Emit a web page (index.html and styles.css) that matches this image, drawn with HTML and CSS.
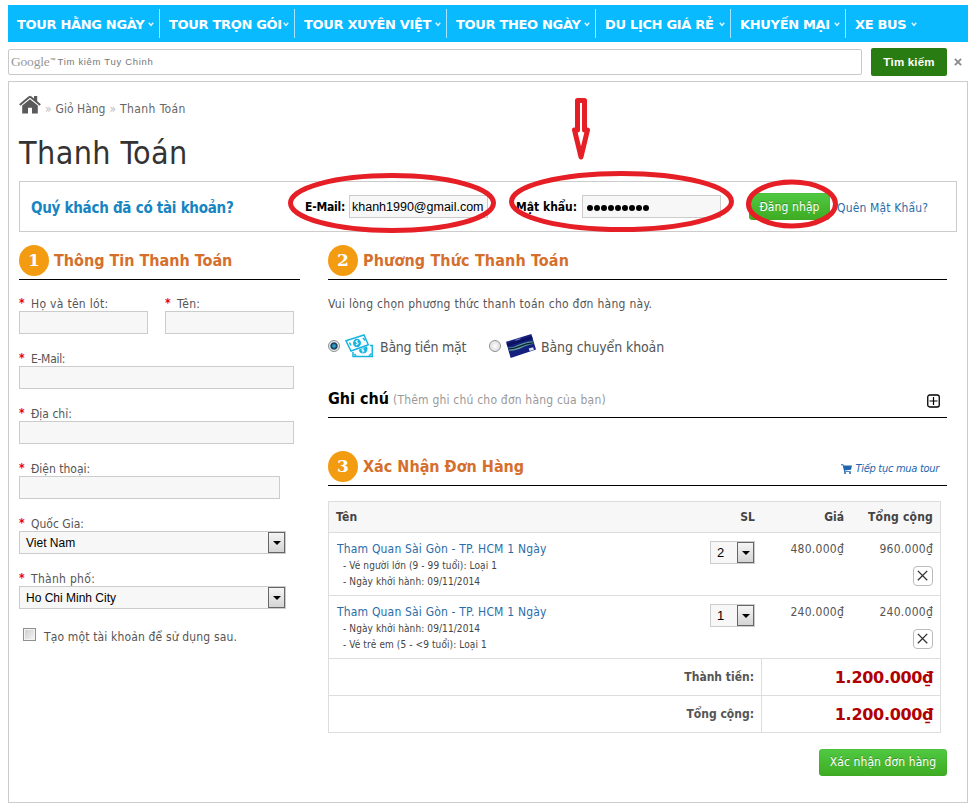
FILE: index.html
```html
<!DOCTYPE html>
<html lang="vi">
<head>
<meta charset="utf-8">
<title>Thanh Toán</title>
<link rel="stylesheet" href="styles.css">
</head>
<body>
<svg class="defs" width="0" height="0">
  <symbol id="chev" viewBox="0 0 6 5"><path d="M.8 .8 3 3.4 5.2 .8" fill="none" stroke="#e4f8ff" stroke-width="1.4"/></symbol>
  <symbol id="cross" viewBox="0 0 20 20"><path d="M4.3 4.300l10.400 10.400M14.700 4.300L4.300 14.700" fill="none" stroke="#333" stroke-width="1.500"/></symbol>
</svg>
<nav class="menu">
  <a class="m1"><span>TOUR HẰNG NGÀY</span><svg><use href="#chev"/></svg></a>
  <a class="m2"><span>TOUR TRỌN GÓI</span><svg><use href="#chev"/></svg></a>
  <a class="m3"><span>TOUR XUYÊN VIỆT</span><svg><use href="#chev"/></svg></a>
  <a class="m4"><span>TOUR THEO NGÀY</span><svg><use href="#chev"/></svg></a>
  <a class="m5"><span>DU LỊCH GIÁ RẺ</span><svg><use href="#chev"/></svg></a>
  <a class="m6"><span>KHUYẾN MẠI</span><svg><use href="#chev"/></svg></a>
  <a class="m7"><span>XE BUS</span><svg><use href="#chev"/></svg></a>
</nav>
<div class="search">
  <div class="search-box"><span class="google">Google</span><sup>™</sup><span class="hint">Tim kiêm Tuy Chinh</span></div>
  <div class="search-btn">Tìm kiếm</div>
  <svg class="clear" viewBox="0 0 9 9"><path d="M1 1l7 7M8 1L1 8" stroke="#8c8c8c" stroke-width="2.1"/></svg>
</div>
<main class="page">
  <div class="crumbs">
    <svg class="home" viewBox="0 0 22 20"><path d="M11 1.500 5.500 6 .8 10M11 1.500 16.500 6l4.700 4" fill="none" stroke="#5a5a5a" stroke-width="2"/><path d="M15 1h3.200v6L15 4.500z" fill="#5a5a5a"/><path d="M11 4.200 3.200 10.600V18.500h5.800v-5.700h4v5.700h5.800v-7.900z" fill="#5a5a5a"/></svg>
    <i>»</i><span>Giỏ Hàng</span><i>»</i><span class="cur">Thanh Toán</span>
  </div>
  <h1><span>Thanh Toán</span></h1>
  <section class="login">
    <strong class="ask">Quý khách đã có tài khoản?</strong>
    <b class="lb-mail">E-Mail:</b><div class="field in-mail">khanh1990@gmail.com</div>
    <b class="lb-pass">Mật khẩu:</b><div class="field in-pass"><svg viewBox="0 0 66 8"><path d="M4 4h0M11 4h0M18 4h0M25 4h0M32 4h0M39 4h0M46 4h0M53 4h0M60 4h0" stroke="#000" stroke-width="6" stroke-linecap="round"/></svg></div>
    <div class="btn btn-login"><span>Đăng nhập</span></div>
    <a class="forgot">Quên Mật Khẩu?</a>
  </section>
  <div class="columns">
    <section class="left">
      <h2><em>1</em><span class="h-a">Thông Tin Thanh Toán</span></h2>
      <div class="pair">
        <div class="row"><label><i>*</i><span class="l1">Họ và tên lót:</span></label><div class="field"></div></div>
        <div class="row"><label><i>*</i><span class="l1">Tên:</span></label><div class="field"></div></div>
      </div>
      <div class="row"><label><i>*</i><span class="l2">E-Mail:</span></label><div class="field"></div></div>
      <div class="row"><label><i>*</i><span>Địa chỉ:</span></label><div class="field"></div></div>
      <div class="row"><label><i>*</i><span>Điện thoại:</span></label><div class="field phone"></div></div>
      <div class="row"><label><i>*</i><span>Quốc Gia:</span></label><div class="field select"><span>Viet Nam</span><u></u></div></div>
      <div class="row"><label><i>*</i><span class="l1">Thành phố:</span></label><div class="field select"><span>Ho Chi Minh City</span><u></u></div></div>
      <div class="create"><s></s><span>Tạo một tài khoản để sử dụng sau.</span></div>
    </section>
    <section class="right">
      <h2><em>2</em><span class="h-b">Phương Thức Thanh Toán</span></h2>
      <p class="intro"><span>Vui lòng chọn phương thức thanh toán cho đơn hàng này.</span></p>
      <div class="methods">
        <s class="radio on"></s>
        <svg class="cash" viewBox="0 0 28 24"><g fill="none" stroke="#18b5e0" stroke-width="1.500"><path d="M1 6.800 19 1l4.300 9.800L6 17z"/><path d="M25 11.500h2.300v11H8v-4.500"/><path d="M4.500 8.500l1.500 3M18 4l2 2.500M11 22l-1.500-2M24 22l2.500-2.500"/></g><ellipse cx="12" cy="9" rx="4" ry="4.300" fill="#18b5e0"/><path d="M12.800 6.500l-1.800 1 2 2-2 1.500" fill="none" stroke="#fff" stroke-width="1.100"/><path d="M14 15.500l8-3.200c1.500 4-.5 7.200-4 7.200-2.500 0-4-1.500-4-4z" fill="#18b5e0"/><path d="M18.500 14.500l-1.500 1.300 1.800 1-1.500 1.500" fill="none" stroke="#fff" stroke-width="1.100"/></svg>
        <span class="t-cash">Bằng tiền mặt</span>
        <s class="radio"></s>
        <svg class="card" viewBox="0 0 29 23"><path d="M0 7.500 24.500 0 29 15 4.500 23z" fill="#15207e"/><path d="M.6 9.300 25 2l.8 2.200L1.400 11.800z" fill="#0c1160"/><path d="M2.300 13c7 .5 10-5 23.500-6l.7 2.500C17 10.500 13 16.500 3.300 16z" fill="#5d9aa0"/><path d="M2.500 14.300c9 0 12-5 23.500-5.800" fill="none" stroke="#0a1e2c" stroke-width="1.300"/><path d="M22 14l4.200-1.400.8 2.500-4.200 1.300z" fill="#d9e4f4"/><path d="M9 6l5-1.500" stroke="#8e9bd8" stroke-width=".8"/></svg>
        <span class="t-card">Bằng chuyển khoản</span>
      </div>
      <div class="note"><b>Ghi chú</b><span>(Thêm ghi chú cho đơn hàng của bạn)</span>
        <svg viewBox="0 0 13 14"><rect x=".75" y="1" width="11.500" height="12" rx="2" fill="none" stroke="#000" stroke-width="1.300"/><path d="M6.500 3v8M2.500 7h8" stroke="#000" stroke-width="1.200"/></svg></div>
      <h2 class="third"><em>3</em><span class="h-c">Xác Nhận Đơn Hàng</span>
        <a class="more"><svg viewBox="0 0 11 10"><path d="M0 .3h2.300l.4 1.200H11L10 5.800 3.800 6.500l.2.700h5.800V8H3.200L1.700 1.200H0z" fill="#1f66ad"/><circle cx="4" cy="9" r="1" fill="#1f66ad"/><circle cx="9" cy="9" r="1" fill="#1f66ad"/></svg><span>Tiếp tục mua tour</span></a></h2>
      <div class="cart">
        <div class="tr head"><b class="c-name">Tên</b><b>SL</b><b>Giá</b><b class="tc">Tổng cộng</b></div>
        <div class="tr item">
          <div class="c-name"><a>Tham Quan Sài Gòn - TP. HCM 1 Ngày</a><small class="s1">- Vé người lớn (9 - 99 tuổi): Loại 1</small><small class="s2">- Ngày khởi hành: 09/11/2014</small></div>
          <div><div class="field select qty"><span>2</span><u></u></div></div>
          <div class="price">480.000₫</div>
          <div class="price">960.000₫<svg class="del"><use href="#cross"/></svg></div>
        </div>
        <div class="tr item">
          <div class="c-name"><a>Tham Quan Sài Gòn - TP. HCM 1 Ngày</a><small class="s2">- Ngày khởi hành: 09/11/2014</small><small class="s3">- Vé trẻ em (5 - &lt;9 tuổi): Loại 1</small></div>
          <div><div class="field select qty"><span>1</span><u></u></div></div>
          <div class="price">240.000₫</div>
          <div class="price">240.000₫<svg class="del"><use href="#cross"/></svg></div>
        </div>
        <div class="total"><b>Thành tiền:</b><strong>1.200.000₫</strong></div>
        <div class="total"><b>Tổng cộng:</b><strong>1.200.000₫</strong></div>
      </div>
      <div class="btn btn-confirm"><span>Xác nhận đơn hàng</span></div>
    </section>
  </div>
</main>
<svg class="marks" viewBox="0 0 972 808"><g fill="none" stroke="#e61e25" stroke-width="5"><ellipse cx="392" cy="203" rx="101.500" ry="27.500"/><ellipse cx="621.500" cy="201.500" rx="110" ry="28"/><ellipse cx="792" cy="204" rx="43.500" ry="22"/><path d="M577.500 100.500h7v29.500h3L581 157l-6.500-27h3z" stroke-linejoin="round"/></g></svg>
</body>
</html>
```
FILE: styles.css
```css
* { box-sizing: border-box; }
body { margin: 0; padding: 5px 4px 0 8px; width: 972px; height: 808px; overflow: hidden; background: #fff; position: relative; font: 12px/16px "DejaVu Sans Condensed", "DejaVu Sans", sans-serif; color: #555; }
i, em, u, s { font-style: normal; text-decoration: none; }
h1, h2, p { margin: 0; }
span, b, a, strong { white-space: nowrap; }
.defs { position: absolute; }
.menu { display: flex; align-items: center; width: 960px; height: 37px; background: #09baff; color: #fff; }
.menu a { display: flex; align-items: center; height: 29px; padding: 2px 0 0 9px; border-right: 1px solid #a6e5ff; font: bold 13px/20px "DejaVu Sans", sans-serif; letter-spacing: -.32px; }
.menu svg { flex: none; width: 6px; height: 5px; margin-left: auto; margin-right: 5px; }
.menu .m1 { width: 152px; }
.m2 { width: 135px; }
.m3 { width: 152px; }
.m4 { width: 149px; }
.m5 { width: 135px; }
.m6 { width: 115px; }
.menu .m7 { width: 76px; border: 0; }
.search { display: flex; align-items: center; height: 28px; margin-top: 6px; }
.search-box { display: flex; align-items: center; width: 854px; height: 26px; padding-left: 2px; border: 1px solid #c9c9c9; border-radius: 2px; color: #777; }
.google { font: 13.500px/20px "Liberation Serif", serif; letter-spacing: -.2px; color: #999; }
.search-box sup { font: 6px/8px "Liberation Sans", sans-serif; margin-top: -4px; }
.hint { margin-left: 2px; font: 9.500px/14px "Liberation Sans", sans-serif; letter-spacing: .68px; }
.search-btn { width: 76px; height: 28px; margin-left: 9px; background: #297c12; color: #fff; border-radius: 2px; text-align: center; font: bold 11.500px/28px "Liberation Sans", sans-serif; letter-spacing: .2px; }
.clear { width: 8px; height: 8px; margin-left: 7px; }
.page { width: 960px; height: 722px; margin-top: 5px; padding: 0 10px; border: 1px solid #ccc; }
.crumbs { display: flex; height: 34px; padding-top: 13px; align-items: flex-start; color: #666; }
.home { width: 22px; height: 20px; }
.crumbs span, .crumbs i { margin-top: 6px; }
.crumbs .cur { letter-spacing: .4px; }
.crumbs i { color: #bbb; margin-left: 4px; margin-right: 4px; }
h1 { height: 65px; padding-top: 17px; font-weight: 400; font-size: 32px; line-height: 40px; letter-spacing: .4px; color: #333; }
.login { display: flex; align-items: center; width: 938px; height: 51px; padding-left: 11px; border: 1px solid #ccc; color: #000; }
.ask { width: 274px; color: #1585c2; font-size: 15px; letter-spacing: -.26px; padding-top: 2px; }
.lb-mail { width: 44px; letter-spacing: -.2px; }
.lb-pass { width: 66px; }
.field { height: 23px; border: 1px solid #ccc; background: #f7f7f7; color: #000; font: 12.500px/22px "Liberation Sans", sans-serif; }
.in-mail { width: 139px; padding-left: 2px; margin-right: 28px; }
.in-pass { width: 139px; padding: 0 3px; }
.in-pass svg { display: block; width: 66px; height: 8px; margin-top: 8px; }
.btn { background: linear-gradient(#50c942, #3eab22); color: #fff; border-radius: 4px; text-align: center; letter-spacing: .1px; text-shadow: 0 -1px 0 rgba(0,0,0,.25); box-shadow: inset 0 0 1px #2b8a1d; }
.btn-login { width: 81px; height: 27px; line-height: 29px; margin-left: 28px; }
.forgot { margin-left: 7px; color: #2a6da8; padding-top: 2px; letter-spacing: .15px; }
.columns { display: flex; justify-content: space-between; width: 928px; padding-top: 13px; }
.left { width: 281px; }
.right { width: 619px; }
h2 { display: flex; align-items: center; height: 35px; padding-bottom: 3px; border-bottom: 1px solid #000; color: #d56f2d; font-size: 16px; line-height: 24px; }
.h-b { letter-spacing: .13px; }
h2 em { flex: none; width: 30px; height: 31px; margin-right: 5px; border-radius: 50%; background: #f39c12; color: #fff; text-align: center; font: bold 17px/31px "DejaVu Serif", serif; }
.pair { display: flex; gap: 17px; }
.pair .row { width: 129px; }
.row { width: 275px; height: 55px; padding-top: 15px; }
label { display: flex; height: 17px; align-items: flex-start; }
label i { width: 12px; color: #e00; font-weight: bold; line-height: 16px; }
label span { line-height: 18px; }
.l1 { letter-spacing: .3px; }
.l2 { letter-spacing: -.3px; }
.left .field { margin-top: -1px; }
.phone { width: 261px; }
.select { display: flex; justify-content: space-between; width: 267px; padding-left: 6px; font-size: 12px; }
.select u { flex: none; width: 17px; height: 21px; border: 1px solid #666; background: linear-gradient(#f5f5f5, #d4d4d4); display: flex; align-items: center; justify-content: center; }
.select u::after { content: ""; border: 4px solid transparent; border-top-color: #000; border-bottom: 0; }
.create { display: flex; padding: 18px 0 0 4px; letter-spacing: .15px; }
.create s { width: 13px; height: 13px; margin-right: 8px; border: 1px solid #8e8f8f; background: linear-gradient(135deg, #ccc, #f6f6f6); box-shadow: inset 0 0 0 1px #f4f4f4; }
.create span { margin-top: 1px; }
.intro { padding-top: 16px; letter-spacing: .28px; }
.methods { display: flex; align-items: center; height: 30px; margin-top: 19px; font-size: 14px; }
.methods span { padding-top: 1px; }
.radio { width: 12px; height: 12px; border: 1px solid #8e8f8f; border-radius: 50%; background: radial-gradient(#fff, #ccc); box-shadow: inset 0 0 0 1px #eee; }
.radio.on { background: radial-gradient(circle, #2d9fd1 0 1px, #16384f 3px, #dceaf2 4.500px); }
.cash { width: 28px; height: 24px; margin: 0 7px 0 5px; }
.t-cash { width: 109px; letter-spacing: -.25px; }
.card { width: 30px; height: 24px; margin: 0 5px 0 5px; }
.t-card { letter-spacing: -.12px; }
.note { display: flex; align-items: center; height: 41px; margin-top: 16px; padding-top: 4px; border-bottom: 1px solid #000; }
.note b { color: #000; font-size: 16px; width: 65px; }
.note span { color: #999; padding-top: 2px; letter-spacing: .2px; }
.note svg { width: 13px; height: 14px; margin-left: auto; margin-right: 7px; margin-top: 4px; }
.third { margin-top: 33px; }
.more { display: flex; align-items: center; margin: 4px 8px 0 auto; color: #1f66ad; font: italic 11px/16px "DejaVu Sans Condensed", sans-serif; letter-spacing: -.29px; }
.more svg { width: 11px; height: 10px; margin-right: 3px; }
.cart { width: 613px; margin-top: 15px; border: 1px solid #ddd; border-bottom: 0; }
.tr { display: grid; grid-template-columns: 371px 63px 81px 89px; border-bottom: 1px solid #ddd; text-align: right; }
.c-name { text-align: left; padding-left: 8px; }
.head { height: 31px; align-items: center; background: #f7f7f7; color: #444; }
.head .c-name { padding-left: 7px; }
.tc { letter-spacing: .2px; }
.tr > b:nth-child(2), .tr > div:nth-child(2) { padding-right: 8px; }
.item { height: 63px; padding-top: 8px; }
.item a { display: block; color: #2a6da8; letter-spacing: .18px; margin-bottom: 1px; }
.item small { display: block; font-size: 10px; line-height: 16px; padding-left: 6px; color: #444; letter-spacing: .1px; }
.price { letter-spacing: .25px; }
.qty { width: 45px; margin-left: auto; margin-right: 0; font-size: 13px; }
.del { display: block; width: 20px; height: 20px; margin: 9px 0 0 auto; border: 1px solid #bbb; border-radius: 4px; }
.total { display: flex; height: 37px; border-bottom: 1px solid #ddd; line-height: 37px; }
.total b { width: 433px; padding-right: 7px; border-right: 1px solid #ddd; text-align: right; }
.total strong { flex: 1; padding-right: 7px; text-align: right; color: #b00000; font-family: "DejaVu Sans", sans-serif; font-size: 16px; letter-spacing: -.3px; }
.btn-confirm { width: 128px; height: 27px; line-height: 27px; margin: 16px 0 0 auto; }
.marks { position: absolute; left: 0; top: 0; width: 972px; height: 808px; }
```
